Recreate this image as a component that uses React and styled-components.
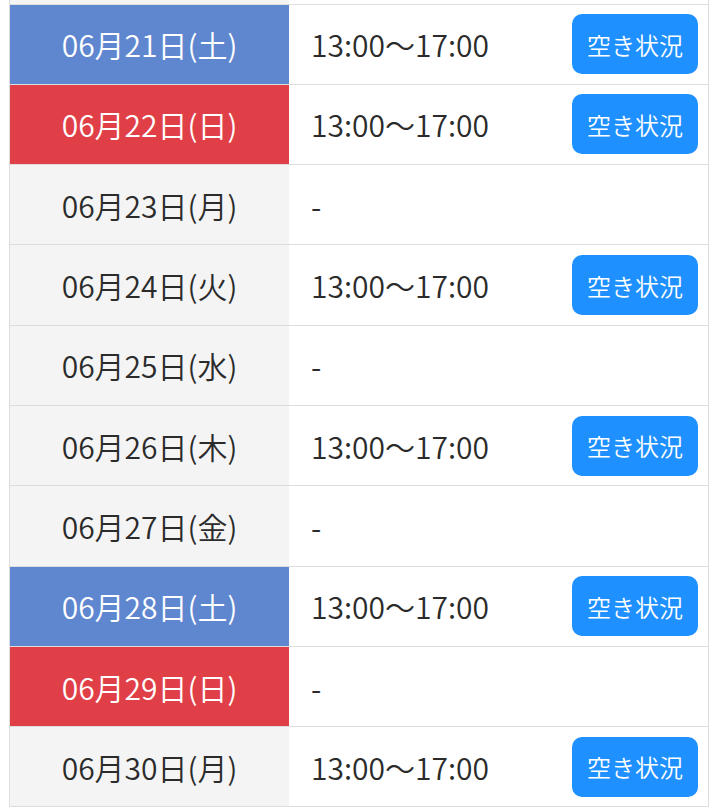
import React from 'react'
import styled, { createGlobalStyle } from 'styled-components'

const days = [
    { date: '06月21日(土)', kind: 'sat', time: '13:00〜17:00' },
    { date: '06月22日(日)', kind: 'sun', time: '13:00〜17:00' },
    { date: '06月23日(月)', kind: 'weekday', time: null },
    { date: '06月24日(火)', kind: 'weekday', time: '13:00〜17:00' },
    { date: '06月25日(水)', kind: 'weekday', time: null },
    { date: '06月26日(木)', kind: 'weekday', time: '13:00〜17:00' },
    { date: '06月27日(金)', kind: 'weekday', time: null },
    { date: '06月28日(土)', kind: 'sat', time: '13:00〜17:00' },
    { date: '06月29日(日)', kind: 'sun', time: null },
    { date: '06月30日(月)', kind: 'weekday', time: '13:00〜17:00' },
]

const App = () => {
    return (
        <>
            <GlobalStyle />
            <Viewport>
                <Schedule>
                    <tbody>
                        {/* tail of the previous row, scrolled mostly out of view */}
                        <PeekRow>
                            <DateCell $kind="weekday" />
                            <TimeCell />
                        </PeekRow>
                        {days.map((d) => (
                            <Row key={d.date}>
                                <DateCell $kind={d.kind}>{d.date}</DateCell>
                                <TimeCell>
                                    <TimeInner>
                                        <span>{d.time || '-'}</span>
                                        {d.time && <StatusButton>空き状況</StatusButton>}
                                    </TimeInner>
                                </TimeCell>
                            </Row>
                        ))}
                    </tbody>
                </Schedule>
            </Viewport>
        </>
    )
}

export default App

const GlobalStyle = createGlobalStyle`
    html, body {
        margin: 0;
        padding: 0;
        background: #fff;
    }
    body {
        font-family: "Noto Sans CJK JP", "Noto Sans", sans-serif;
        color: #333;
    }
`

const Viewport = styled.div`
    width: 720px;
    height: 809px;
    overflow: hidden;
    padding-left: 9px;
    box-sizing: border-box;
`

const Schedule = styled.table`
    width: 700px;
    border-collapse: collapse;
    border-left: 1px solid #ddd;
    border-right: 1px solid #ddd;
`

const Row = styled.tr`
    height: 80.3px;
    border-bottom: 1px solid #ddd;
`

const PeekRow = styled(Row)`
    height: 4px;
`

const kindBg = {
    weekday: '#f4f4f4',
    sat: '#5f87cf',
    sun: '#e03f47',
}

const DateCell = styled.td`
    width: 40%;
    padding: 0;
    text-align: center;
    font-size: 30px;
    font-weight: 350;
    background-color: ${(p) => kindBg[p.$kind]};
    color: ${(p) => (p.$kind === 'weekday' ? '#2b2b2b' : '#fff')};
`

const TimeCell = styled.td`
    padding: 0 10px 0 22px;
    font-size: 30px;
    font-weight: 350;
    color: #2b2b2b;
`

const TimeInner = styled.div`
    display: flex;
    align-items: center;
    justify-content: space-between;
`

const StatusButton = styled.button`
    cursor: pointer;
    border: none;
    width: 126px;
    height: 60px;
    border-radius: 10px;
    background-color: #1e90ff;
    color: #fff;
    font-family: inherit;
    font-size: 24px;
    font-weight: 350;
    padding: 0;
`
